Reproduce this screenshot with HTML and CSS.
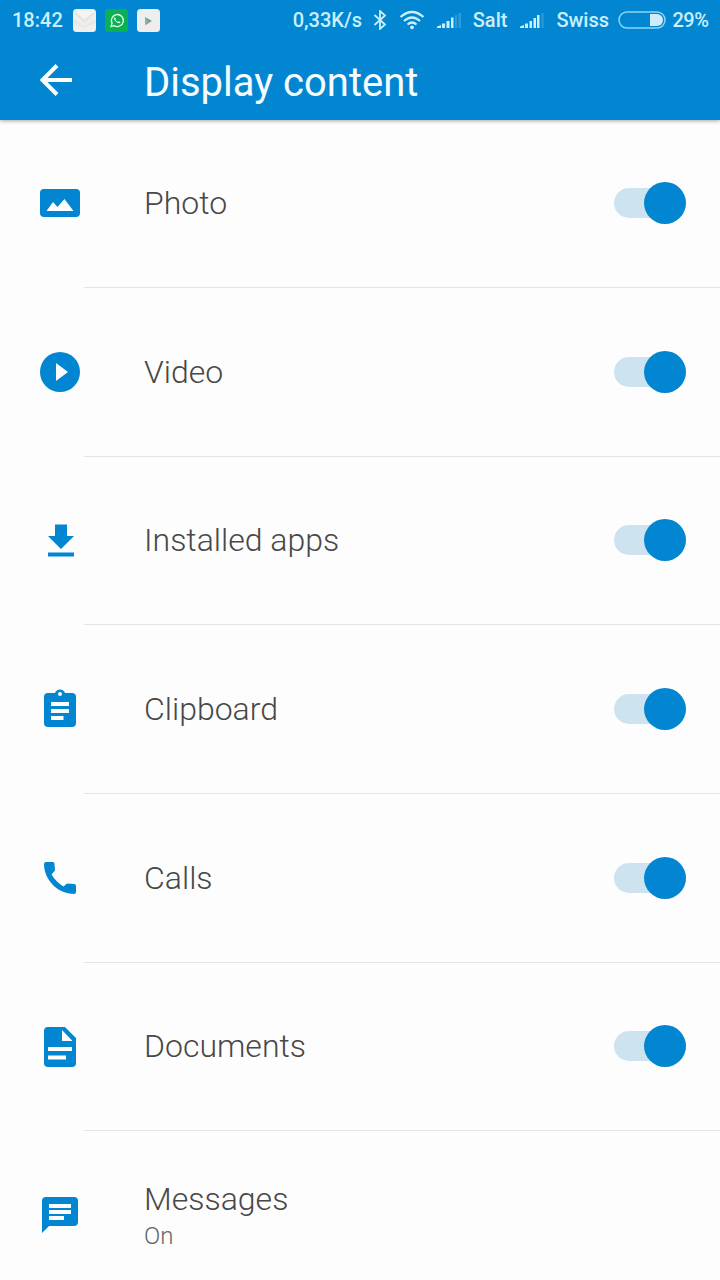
FILE: index.html
```html
<!DOCTYPE html>
<html lang="en">
<head>
  <meta charset="UTF-8">
  <title>Display content</title>
  <link rel="stylesheet" href="styles.css">
</head>
<body>

  <header class="header">
    <div class="status">
      <span class="time">18:42</span>
      <svg class="app" viewBox="0 0 23 23">
        <rect width="23" height="23" rx="3.5" fill="#f0efee"/>
        <path d="M1 10L11.500 17L22 10V14L11.500 19L1 14Z" fill="#e9e8e7"/>
        <path d="M1 4H22L11.500 14Z" fill="#e4e3e0"/>
        <path d="M2 2.500H21L11.500 11Z" fill="#f5f4f3"/>
      </svg>
      <svg class="app" viewBox="0 0 23 23">
        <rect width="23" height="23" rx="3" fill="#0ab153"/>
        <path d="M6 17.500L7 14.200A6 6 0 1 1 9.200 16.600Z" fill="none" stroke="#e6fff0" stroke-width="1.300"/>
        <path d="M9.500 8.200C8.500 9.500 9.500 11.300 11 12.800S14.500 14.800 15.600 13.300L14 12.200L13 13C11.800 12.500 11 11.600 10.400 10.500L11 9.600Z" fill="#e6fff0"/>
      </svg>
      <svg class="app" viewBox="0 0 23 23">
        <rect width="23" height="23" rx="3.500" fill="#eeeeef"/>
        <path d="M8 8L11 12L8 16.500Z" fill="#6db9dc"/>
        <path d="M8 8L15 12H10.500Z" fill="#51b47f"/>
        <path d="M8 16.500L15 12H10.500Z" fill="#dd7886"/>
      </svg>

      <span class="speed">0,33K/s</span>
      <svg class="bluetooth" width="14" height="20" viewBox="0 0 14 20">
        <path d="M1.500 5L12 14.500L7 19V1L12 5.500L1.500 15" fill="none" stroke="#c9f0fd" stroke-width="1.800"/>
      </svg>
      <svg class="wifi" width="26" height="20" viewBox="0 0 26 20">
        <path d="M1.500 7Q13 -3 24.500 7M5 11Q13 4 21 11M8.500 14.500Q13 10.500 17.500 14.500" fill="none" stroke="#c9f0fd" stroke-width="2.200"/>
        <circle cx="13" cy="17.300" r="1.900" fill="#c9f0fd"/>
      </svg>
      <svg class="signal" width="25" height="16" viewBox="0 0 25 16">
        <path d="M0 16V14.500L4 13V16ZM5 16V11.500H8V16ZM9.500 16V9H12.500V16ZM14 16V5.500H16.500V16Z" fill="#c9f0fd"/>
        <path d="M18 3H20V16H18ZM21.500 1H24V16H21.500Z" fill="#2b9bda"/>
      </svg>
      <span class="salt">Salt</span>
      <svg class="signal" width="25" height="16" viewBox="0 0 25 16">
        <path d="M1 16V14.500L5 13V16ZM6 16V11.500H9V16ZM10.500 16V9H13V16ZM14.500 16V6H17V16ZM18 16V3H20.500V16Z" fill="#c9f0fd"/>
        <path d="M22.500 1H24.500V16H22.500Z" fill="#2b9bda"/>
      </svg>
      <span class="swiss">Swiss</span>
      <svg class="battery" width="48" height="18" viewBox="0 0 48 18">
        <rect x="1" y="1" width="46" height="16" rx="8" fill="none" stroke="#8bd5f7" stroke-width="1.500"/>
        <path d="M32 3H39A6 6 0 0 1 39 15H32Z" fill="#cfecf9"/>
      </svg>
      <span class="percent">29%</span>
    </div>

    <div class="toolbar">
      <svg class="back" width="36" height="36" viewBox="0 0 36 36">
        <path d="M34 18H4M19 3.500L4.500 18L19 32.500" fill="none" stroke="#fff" stroke-width="4"/>
      </svg>
      <h1 class="title">Display content</h1>
    </div>
  </header>

  <main class="list">
    <div class="row">
      <svg class="icon" viewBox="0 0 48 48">
        <path fill-rule="evenodd" d="M8 10H40A4 4 0 0 1 44 14V34A4 4 0 0 1 40 38H8A4 4 0 0 1 4 34V14A4 4 0 0 1 8 10ZM10.500 32H37.500L28.500 20L21.500 28L17 23Z"/>
      </svg>
      <div class="content">
        <span class="label">Photo</span>
        <span class="switch"></span>
      </div>
    </div>

    <div class="row">
      <svg class="icon" viewBox="0 0 48 48">
        <path fill-rule="evenodd" d="M24 4A20 20 0 1 0 24 44A20 20 0 1 0 24 4ZM20 15V33L32 24Z"/>
      </svg>
      <div class="content">
        <span class="label">Video</span>
        <span class="switch"></span>
      </div>
    </div>

    <div class="row">
      <svg class="icon" viewBox="0 0 48 48">
        <path d="M19 8.500H31V20H38L25 33L12 20H19ZM12 36.500H38V40.500H12Z"/>
      </svg>
      <div class="content">
        <span class="label">Installed apps</span>
        <span class="switch"></span>
      </div>
    </div>

    <div class="row">
      <svg class="icon" viewBox="0 0 48 48">
        <path fill-rule="evenodd" d="M12 8H19A5.300 5.300 0 0 1 29 8H36A4 4 0 0 1 40 12V38A4 4 0 0 1 36 42H12A4 4 0 0 1 8 38V12A4 4 0 0 1 12 8ZM24 7A2 2 0 1 0 24 11A2 2 0 1 0 24 7ZM15 17V21H33V17ZM15 24V28H33V24ZM15 31V35H27.500V31Z"/>
      </svg>
      <div class="content">
        <span class="label">Clipboard</span>
        <span class="switch"></span>
      </div>
    </div>

    <div class="row">
      <svg class="icon" viewBox="0 0 48 48">
        <path d="M8 10A2 2 0 0 1 10 8H16A2 2 0 0 1 18.500 10L19 16.500L15.500 20.500Q20 28 27.500 32.500L31 29.500L38 30A2 2 0 0 1 40 32V38A2 2 0 0 1 38 40C22 40 8 26 8 10Z"/>
      </svg>
      <div class="content">
        <span class="label">Calls</span>
        <span class="switch"></span>
      </div>
    </div>

    <div class="row">
      <svg class="icon" viewBox="0 0 48 48">
        <path fill-rule="evenodd" d="M12 4H29L40 15V40A4 4 0 0 1 36 44H12A4 4 0 0 1 8 40V8A4 4 0 0 1 12 4ZM26 7V18H36.500ZM12 24V28H36V24ZM12 32.500V36.500H30V32.500Z"/>
      </svg>
      <div class="content">
        <span class="label">Documents</span>
        <span class="switch"></span>
      </div>
    </div>

    <div class="row">
      <svg class="icon" viewBox="0 0 48 48">
        <path fill-rule="evenodd" d="M10 6H38A4 4 0 0 1 42 10V31A4 4 0 0 1 38 35H13L6 42V10A4 4 0 0 1 10 6ZM13 13V17H35V13ZM13 19V23H35V19ZM13 25V29H28V25Z"/>
      </svg>
      <div class="content">
        <div class="text">
          <span class="label">Messages</span>
          <span class="sub">On</span>
        </div>
      </div>
    </div>
  </main>

</body>
</html>
```

FILE: styles.css
```css
body {
  margin: 0;
  height: 1280px;
  overflow: hidden;
  background-color: #fdfdfd;
  font-family: Roboto, sans-serif;
}
.header {
  height: 120px;
  background-color: #0386d1;
  box-shadow: 0 1px 4px rgba(0, 0, 0, 0.35);
}
.status {
  display: flex;
  align-items: center;
  height: 40px;
  padding: 0 12px;
  box-sizing: border-box;
  color: #c9f0fd;
  font-size: 20px;
  font-weight: 500;
  white-space: nowrap;
}
.status svg {
  flex-shrink: 0;
}
.time {
  width: 51px;
}
.app {
  width: 23px;
  height: 23px;
  margin-left: 9px;
}
.time + .app {
  margin-left: 10px;
}
.speed {
  width: 69px;
  margin-left: 133px;
}
.bluetooth {
  margin-left: 11px;
}
.wifi {
  margin-left: 12px;
}
.signal {
  margin: 0 11px 0 12px;
}
.salt {
  width: 36px;
}
.swiss {
  width: 51px;
  margin-left: 1px;
}
.battery {
  margin-left: 11px;
}
.percent {
  margin-left: 6px;
  letter-spacing: -0.5px;
}
.toolbar {
  display: flex;
  align-items: center;
  height: 80px;
  padding-left: 38px;
}
.title {
  margin: 4px 0 0 70px;
  color: #f4fcff;
  font-size: 40px;
  font-weight: 400;
}
.row {
  display: flex;
  height: 168.7px;
  padding-left: 36px;
}
.row:first-child {
  height: 168px;
}
.icon {
  width: 48px;
  height: 48px;
  margin-bottom: 1.2px;
  align-self: center;
  fill: #0386d1;
}
.content {
  flex: 1;
  display: flex;
  align-items: center;
  justify-content: space-between;
  padding: 0 34px 0.7px 60px;
  border-bottom: 1px solid #e4e4e4;
}
.label {
  color: #484848;
  font-size: 32px;
  font-weight: 300;
  line-height: 40px;
}
.switch {
  display: flex;
  align-items: center;
  justify-content: flex-end;
  width: 72px;
  height: 30px;
  border-radius: 15px;
  background-color: #cde3ef;
}
.switch::after {
  content: "";
  flex-shrink: 0;
  width: 42px;
  height: 42px;
  border-radius: 50%;
  background-color: #0386d1;
}
.text {
  display: flex;
  flex-direction: column;
  padding-top: 2px;
}
.sub {
  color: #666;
  font-size: 24px;
  font-weight: 300;
  line-height: 34px;
}
```
